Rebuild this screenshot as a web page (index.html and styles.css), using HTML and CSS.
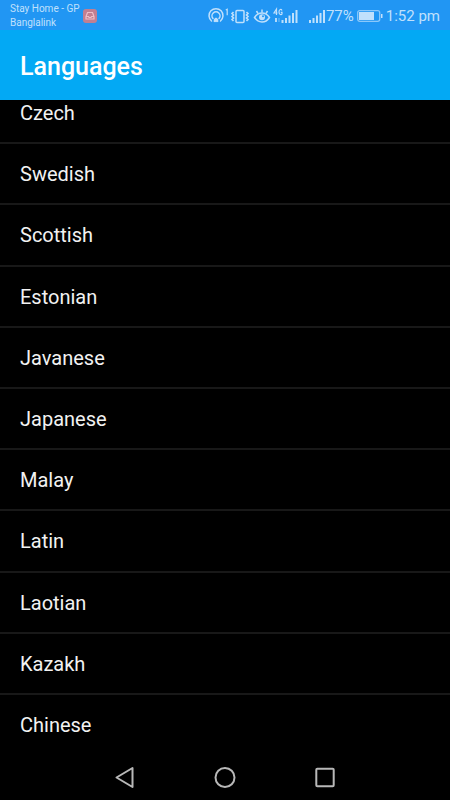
FILE: index.html
```html
<!DOCTYPE html>
<html lang="en">
<head>
<meta charset="utf-8">
<meta name="viewport" content="width=device-width, initial-scale=1">
<title>Languages</title>
<link rel="stylesheet" href="styles.css">
</head>
<body>
<div class="status">
  <div class="carrier">Stay Home - GP<br>Banglalink</div>
  <svg class="app-badge" width="14" height="14" viewBox="0 0 14 14" aria-hidden="true">
    <rect width="14" height="14" rx="3" fill="#c27f91"/>
    <path d="M4.500 3.500h5l1.500 4v2.500H3V7.500z M3.500 7.500h2l.5 1h2l.5-1h2" fill="none" stroke="#edbfc9" stroke-width="1.200"/>
  </svg>
  <div class="indicators">
    <svg width="90" height="20" viewBox="0 0 90 20" fill="none" stroke="#c0e0fc" aria-hidden="true">
      <g stroke-width="1.500" stroke-linecap="round">
        <path d="M3.500 15a7 7 0 1 1 9 0M5 12.500a4 4 0 1 1 6 0"/>
        <path d="M6 15.200q0-3 2-3.200 2 .2 2 3.200z" fill="#c0e0fc" stroke-width="1"/>
      </g>
      <path d="M17.800 4l1.400-.8v6" stroke-width="1.200"/>
      <rect x="28" y="4.500" width="8" height="12" rx="1" stroke-width="1.500"/>
      <path d="M25.500 6l-1.500 1.500 1.500 1.500-1.500 1.500 1.500 1.500-1.500 1.500 1.500 1.500M38.500 6l1.500 1.500-1.500 1.500 1.500 1.500-1.500 1.500 1.500 1.500-1.500 1.500" stroke-width="1.600"/>
      <path d="M46.500 11.500q3-4.500 7.500-4.500t7.500 4.500q-3 4.500-7.500 4.500t-7.500-4.500z" stroke-width="1.500"/>
      <path d="M54 3.500v3M48.500 5l1.500 2.500M59.500 5l-1.500 2.500" stroke-width="1.500"/>
      <circle cx="54" cy="11.200" r="3" fill="#c0e0fc" stroke="none"/>
      <circle cx="55" cy="10.300" r="1" fill="#2196f3" stroke="none"/>
      <path d="M68.500 9V3l-2.500 4h3.500M74 4.500q-.6-1.200-1.700-1-1.300.300-1.300 2.500t1.300 2.500q1.400.200 1.700-.5V6.300h-1.200" stroke-width="1.200"/>
      <path d="M68 12v4" stroke-width="1.800"/>
      <path d="M71 12v4" stroke="#75bdf8"/>
      <path d="M74.500 14v3M78 12v5M81.500 9.500v7.500M85 7v10M88.500 4v13" stroke-width="2"/>
    </svg>
    <svg class="signal" width="16" height="20" viewBox="0 0 16 20" fill="none" stroke="#c0e0fc" stroke-width="2" aria-hidden="true">
      <path d="M1 14v3M4.500 12v5M8 9.500v7.500M11.500 7v10M15 4v13"/>
    </svg>
    <span>77%</span>
    <svg class="battery" width="26" height="12" viewBox="0 0 26 12" aria-hidden="true">
      <rect x=".7" y=".7" width="22" height="10.600" rx="2" fill="none" stroke="#8cc8fa" stroke-width="1.300"/>
      <path d="M2 2h15v8H2z" fill="#c0e0fc"/>
      <path d="M24 4h1.500v4H24z" fill="#c0e0fc"/>
    </svg>
    <span>1:52 pm</span>
  </div>
</div>
<header class="appbar"><h1>Languages</h1></header>
<main class="viewport">
  <ul class="list">
    <li>Czech</li>
    <li>Swedish</li>
    <li>Scottish</li>
    <li>Estonian</li>
    <li>Javanese</li>
    <li>Japanese</li>
    <li>Malay</li>
    <li>Latin</li>
    <li>Laotian</li>
    <li>Kazakh</li>
    <li>Chinese</li>
  </ul>
</main>
<nav class="navbar">
  <button type="button" aria-label="Back">
    <svg width="24" height="24" viewBox="0 0 24 24"><path d="M3.500 11.500L19.500 2v19z"/></svg>
  </button>
  <button type="button" aria-label="Home">
    <svg width="24" height="24" viewBox="0 0 24 24"><circle cx="12" cy="11.500" r="9.500"/></svg>
  </button>
  <button type="button" aria-label="Recent apps">
    <svg width="24" height="24" viewBox="0 0 24 24"><rect x="3.300" y="2.800" width="17.400" height="17.400" rx="1"/></svg>
  </button>
</nav>
</body>
</html>
```
FILE: styles.css
```css
* {
  box-sizing: border-box;
}

body {
  margin: 0;
  height: 100vh;
  display: flex;
  flex-direction: column;
  background: #000;
  color: #f2f2f2;
  font-family: Roboto, sans-serif;
}

.status {
  flex: none;
  height: 30px;
  display: flex;
  align-items: center;
  padding: 1px 10px 0;
  background: #2196f3;
  color: #c0e0fc;
}

.carrier {
  font-size: 10px;
  line-height: 14px;
  white-space: nowrap;
}

.app-badge {
  flex: none;
  margin-left: 3px;
}

.indicators {
  margin-left: auto;
  display: flex;
  align-items: center;
  font-size: 15px;
  line-height: 20px;
  white-space: nowrap;
}

.signal {
  margin: 0 1px 0 11px;
}

.battery {
  margin: 0 3px;
}

.appbar {
  flex: none;
  height: 70px;
  display: flex;
  align-items: center;
  padding: 4px 20px 0;
  background: #03a9f4;
  color: #fff;
}

.appbar h1 {
  margin: 0;
  font-size: 25px;
  font-weight: 500;
  line-height: 32px;
}

/* The list is scrolled a little way into its first row. */
.viewport {
  flex: 1;
  min-height: 0;
  display: flex;
  overflow: hidden;
}

.list {
  flex: 1;
  display: flex;
  flex-direction: column;
  margin: -17px 0 0;
  padding: 0;
  list-style: none;
  font-size: 20px;
  line-height: 24px;
}

.list li {
  flex: 1;
  display: flex;
  align-items: center;
  padding: 1px 20px 0;
  border-bottom: 2px solid #181818;
}

.list li:last-child {
  border-bottom-color: transparent;
}

.navbar {
  flex: none;
  height: 44px;
  display: flex;
  align-items: center;
  justify-content: center;
  gap: 76px;
}

.navbar button {
  display: flex;
  padding: 0;
  border: 0;
  background: none;
}

.navbar svg {
  fill: none;
  stroke: #b8b8b8;
  stroke-width: 2;
  stroke-linejoin: round;
}
```
